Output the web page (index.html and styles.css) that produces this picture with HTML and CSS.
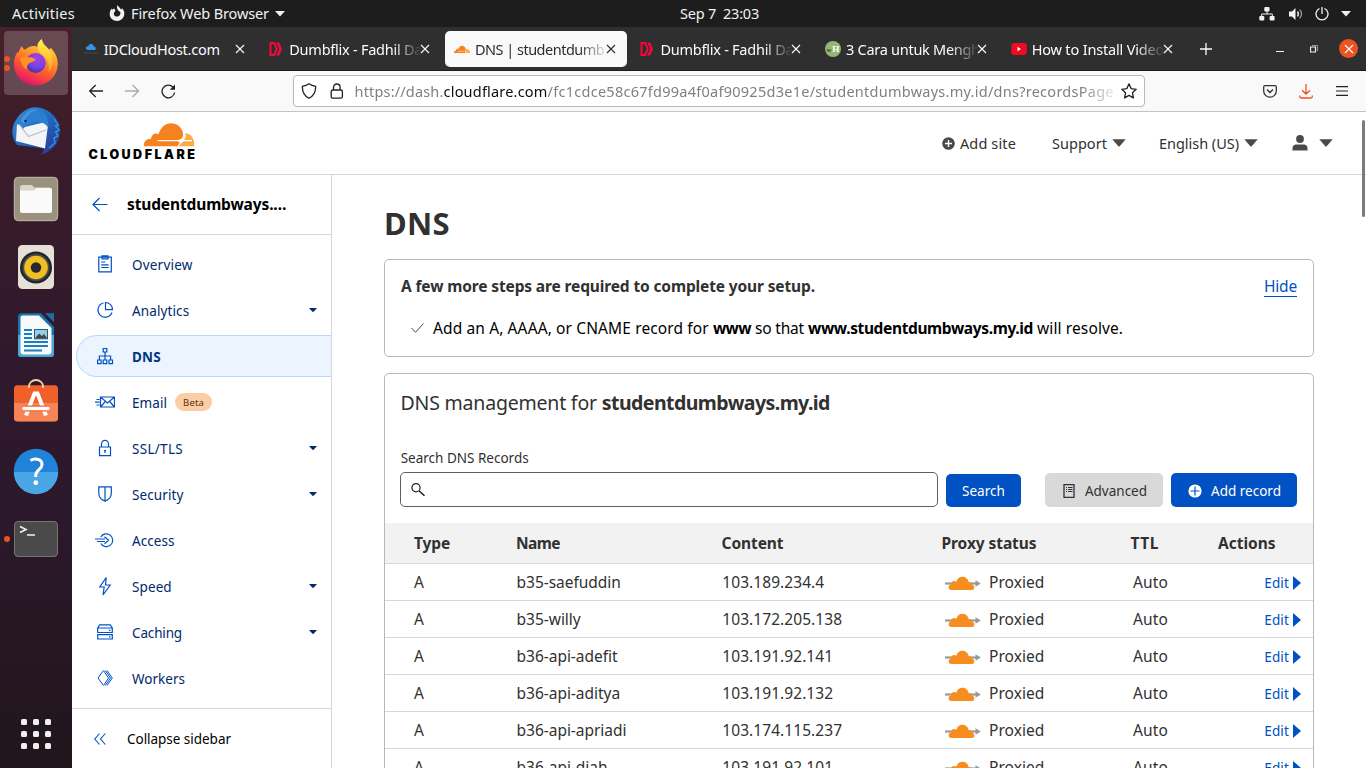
FILE: index.html
```html
<!DOCTYPE html>
<html lang="en">
<head>
<meta charset="utf-8">
<title>DNS | studentdumbways.my.id</title>
<link rel="stylesheet" href="styles.css">
</head>
<body>
<svg class="defs" width="0" height="0">
  <defs>
    <linearGradient id="fxBody" x1="0.8" y1="0" x2="0.35" y2="1"><stop offset="0" stop-color="#ffe83c"/><stop offset=".35" stop-color="#ffa02a"/><stop offset=".65" stop-color="#ff5a2e"/><stop offset="1" stop-color="#e4126e"/></linearGradient>
    <linearGradient id="fxTail" x1="0" y1="0" x2="0" y2="1"><stop offset="0" stop-color="#fff44f"/><stop offset="1" stop-color="#ff9e24"/></linearGradient>
    <radialGradient id="fxGlobe" cx=".6" cy=".25" r=".8"><stop offset="0" stop-color="#a63df0"/><stop offset=".6" stop-color="#7542e5"/><stop offset="1" stop-color="#43309b"/></radialGradient>
    <linearGradient id="tb" x1="0" y1="0" x2="1" y2="1"><stop offset="0" stop-color="#3a8fdb"/><stop offset=".45" stop-color="#1f6fc4"/><stop offset="1" stop-color="#2b2f8f"/></linearGradient>
    <symbol id="dumb" viewBox="0 0 16 16"><path d="M2.500 2H6.300L8.800 8l-2.500 6H2.500z" fill="none" stroke="#f5093d" stroke-width="2"/><path d="M8.300 1.500h2.900L14 8l-2.800 6.500H8.300L11.200 8z" fill="#f5093d"/></symbol>
    <symbol id="x" viewBox="0 0 10 10"><path d="M1 1l8 8M9 1L1 9" stroke="currentColor" stroke-width="1.1" fill="none"/></symbol>
    <symbol id="caret" viewBox="0 0 8 4"><path d="M0 0h8L4.800 3.600q-.8.7-1.600 0z" fill="#00296b"/></symbol>
    <symbol id="down" viewBox="0 0 14 8"><path d="M.3.300h13.400L7.700 7.200q-.7.700-1.400 0z" fill="#4a4a4a"/></symbol>
    <symbol id="proxied" viewBox="0 0 36 14"><path d="M0 7.500h32" stroke="#999" stroke-width="2.200"/><path d="M30.500 4.200l5.300 3.300-5.300 3.300z" fill="#999"/><path d="M6.500 14Q3.600 14 3.600 11.300 3.600 8.700 6.100 8.500 6 5 9.300 5q1.200 0 2 .8C12.300 2.500 14.500.8 17.500.800c3.600 0 5.700 2.400 6.300 5.800q1-.5 2.200-.1 1.400.6 1.300 2.300Q29.400 9.200 29.400 11.500 29.300 14 27 14z" fill="#f78d1e"/></symbol>
  </defs>
</svg>

<header class="topbar">
  <span class="activities">Activities</span>
  <div class="appmenu">
    <svg width="16" height="17" viewBox="0 0 16 17"><path d="M8.500 0c.5 2 3 2.600 3.500 4.800L13 3.300c1.600 1.500 2.500 3.400 2.300 5.700C15 13 12 16 8 16S.700 13 .700 9.300C.700 7 1.400 5 2.800 3.600l.4 1.200L5 3.500l1.500 1.800-1.200 1.900C4 9 5.500 11.600 8 11.600c2.600 0 4-2.400 3.200-4.500L9.500 5.800C8.200 4 7.400 2.500 8.500 0z" fill="#f2f2f2"/></svg>
    <span class="appname">Firefox Web Browser</span>
    <svg width="10" height="6" viewBox="0 0 10 6"><path d="M0 0h10L5 5.500z" fill="#f2f2f2"/></svg>
  </div>
  <span class="clock">Sep 7&nbsp; 23:03</span>
  <div class="tray">
    <svg width="16" height="14" viewBox="0 0 16 14"><path d="M8 4v3M2.700 10V7h10.600v3" stroke="#f2f2f2" fill="none"/><g fill="#f2f2f2"><rect x="5.300" width="5.200" height="4.500" rx="1"/><rect x=".3" y="9" width="5" height="4.500" rx="1"/><rect x="10.600" y="9" width="5" height="4.500" rx="1"/></g></svg>
    <svg width="16" height="14" viewBox="0 0 16 14"><path d="M1 4.500h3L7.500 1v12L4 9.500H1z" fill="#f2f2f2"/><path d="M9.500 4.500q1.800 2.500 0 5" stroke="#f2f2f2" fill="none" stroke-width="1.300"/><path d="M11.700 2.500q3.600 4.500 0 9" stroke="#aaa" fill="none" stroke-width="1.200"/></svg>
    <svg width="14" height="14" viewBox="0 0 14 14"><path d="M4.500 1.500a6 6 0 1 0 5 0M7 0v7" stroke="#f2f2f2" fill="none" stroke-width="1.300"/></svg>
    <svg width="10" height="6" viewBox="0 0 10 6"><path d="M0 0h10L5 5.500z" fill="#f2f2f2"/></svg>
  </div>
</header>

<div class="desktop">
  <aside class="dock">
    <div class="app running two active">
      <svg width="48" height="48" viewBox="0 0 48 48"><path d="M9.700 7c.8 2 2 3.200 4 3.600 2-2.800 6-4 9-3.500 1.500.3 3 1 4 2C26 5 27.500 1.500 30 .2c0 5 4.500 6.800 7.500 10.800l1-2.500c5 5 7.500 11 7.300 17C45 38 36 46.300 24 46.300S2.500 37.500 2 25.800C1.800 19.500 4 14.500 6 12.500l.3 1.800C7 12 8 9.500 9.700 7z" fill="url(#fxBody)"/><circle cx="23.700" cy="24" r="10" fill="url(#fxGlobe)"/><path d="M30 .2c0 5 4.500 6.800 7.500 10.800 5 7.500 4 17-1 22 1.500-7-.5-12-4-15C28 14 24.500 10 25.500 5.500 26.500 3 28 1 30 .2z" fill="url(#fxTail)"/><path d="M8 19.500c3-2 6-2 8.500-1 3-.5 5.500.5 7.300 2.200-1.500 2.300-4 2.300-5.800 3-2 1.200-3.800 3.300-2.500 7-4-1.500-5.500-5-7.500-11.200z" fill="#ff9420"/></svg>
    </div>
    <div class="app">
      <svg width="48" height="48" viewBox="0 0 48 48"><path d="M20 .5C32-1 44 7 47 18c2 8 0 17-5 22-4 4-9 7-14 7.500 3-1.500 4-3.500 4-6L5 38C-1 30-1 20 4 13 8 6 14 2 20 .500z" fill="url(#tb)"/><path d="M5 17L11 20.500 33.500 15l2.500 3-3 23.500L4 34z" fill="#f4f5f7"/><path d="M7 17l9.500 12.500L34 23" fill="none" stroke="#b8bcc4" stroke-width="1.200"/><path d="M9 14C12 5 19-1 27 3c7 2 10 9 9 17-4-5-11-7-18-4-4 1-5 5-7.500 6z" fill="#2c7fcf"/><path d="M9 14c3-8 10-13 17-11-8 1-12 6-14 14z" fill="#4596dc"/><circle cx="13.500" cy="14" r="1.200" fill="#123"/><path d="M42 12l4.500 6-3 1 4 4-4 2 2.500 4-4 2 1 5-6 5" fill="none" stroke="#3192dd" stroke-width="1.500"/></svg>
    </div>
    <div class="app">
      <svg width="48" height="48" viewBox="0 0 48 48"><rect x="2.300" y="2.300" width="43.400" height="43.400" rx="4" fill="#9a927e" stroke="#c4bda9"/><path d="M8 12.500Q8 10 10 10h10l2.500 2.500H37q3 0 3 3V20H8z" fill="#d9d5c8"/><path d="M8 15.500h14l2.500-2.500H38q2 0 2 2v21q0 2-2 2H10q-2 0-2-2z" fill="#fafafa"/></svg>
    </div>
    <div class="app">
      <svg width="48" height="48" viewBox="0 0 48 48"><rect x="6" y="2" width="36" height="44" rx="4.500" fill="#e6e1d6"/><circle cx="24" cy="24.500" r="16" fill="#24262d"/><circle cx="24" cy="24.500" r="13.500" fill="#4a4a50"/><circle cx="24" cy="24.500" r="11.800" fill="#f0bf20"/><circle cx="24" cy="24.500" r="5.200" fill="#28282c"/></svg>
    </div>
    <div class="app">
      <svg width="48" height="48" viewBox="0 0 48 48"><path d="M10 2.300h19L42 16v27q0 3-3 3H9q-3 0-3-3V6q0-3.700 4-3.700z" fill="#1674ad"/><path d="M6 24h36v19q0 3-3 3H9q-3 0-3-3z" fill="#4da6d8"/><path d="M10.500 4.500H27L39.500 17v23.500q0 3-3 3h-25q-3 0-3-3v-34q0-2 2-2z" fill="#f8f9fa"/><path d="M33 2.300h9v9z" fill="#1e6ea5"/><path d="M12 19h8M12 23h8M12 27h8M12 31h24M12 35h24M12 39.500h18" stroke="#1a7fc1" stroke-width="1.900"/><rect x="22.500" y="18.500" width="13" height="9.300" fill="#8fd0f3" stroke="#1f5f86"/><path d="M23 27.500l4-5 3 2.500 2-2 3.500 4.500z" fill="#444"/><circle cx="33.500" cy="20.500" r="1.200" fill="#f5b53a"/></svg>
    </div>
    <div class="app">
      <svg width="48" height="48" viewBox="0 0 48 48"><rect x="2" y="6.300" width="44" height="36" rx="3.500" fill="#f1602a"/><path d="M2 24h44v15q0 3.500-3.500 3.500h-37Q2 42.500 2 39z" fill="#f78456"/><path d="M17 9V7.500a7 6.500 0 0 1 14 0V9" fill="none" stroke="#f3d3a0" stroke-width="1.800"/><path d="M14 36.500l8.500-22h3l8.500 22" fill="none" stroke="#fff" stroke-width="4"/><path d="M12.500 29.500h23" stroke="#f1602a" stroke-width="6"/><path d="M12 29.500h24" stroke="#fff" stroke-width="3.500" stroke-linecap="round"/></svg>
    </div>
    <div class="app">
      <svg width="48" height="48" viewBox="0 0 48 48"><circle cx="24" cy="24" r="22.200" fill="#2082d8"/><path d="M1.800 25h44.400A22.200 22.200 0 0 1 1.800 25z" fill="#49a6e6"/><path d="M18.500 13.500c3-2 11.500-2.500 11.500 4 0 5-6.300 5.500-6.300 11v1.500" fill="none" stroke="#fff" stroke-width="3"/><circle cx="23.800" cy="35.700" r="2.400" fill="#fff"/></svg>
    </div>
    <div class="app running one">
      <svg width="48" height="48" viewBox="0 0 48 48"><rect x="2.500" y="6.500" width="43" height="35" rx="3.500" fill="#4a4a4a" stroke="#75756f"/><path d="M8 11.500l6 3-6 3M15 20h8" fill="none" stroke="#f2f2f2" stroke-width="1.600"/></svg>
    </div>
    <svg class="grid-icon" width="30" height="30" viewBox="0 0 30 30"><g fill="#f0efee"><rect width="6" height="6" rx="1.500"/><rect x="12" width="6" height="6" rx="1.500"/><rect x="24" width="6" height="6" rx="1.500"/><rect y="12" width="6" height="6" rx="1.500"/><rect x="12" y="12" width="6" height="6" rx="1.500"/><rect x="24" y="12" width="6" height="6" rx="1.500"/><rect y="24" width="6" height="6" rx="1.500"/><rect x="12" y="24" width="6" height="6" rx="1.500"/><rect x="24" y="24" width="6" height="6" rx="1.500"/></g></svg>
  </aside>

  <section class="browser">
    <div class="tabs">
      <div class="tab"><svg width="16" height="16" viewBox="0 0 16 16"><path d="M5 9q-2.300-.3-2-2.300.500-1.600 2.200-1.300C5.700 3.300 7 2.700 8.500 3c1.500.3 2.200 1.400 2.200 2.500 1.700 0 2.300 1 2.100 2-.2 1-.9 1.500-1.800 1.500z" fill="#2e97ea"/><path d="M1 12h14" stroke="#4d4d55" stroke-dasharray="2 .5"/></svg><span class="title idc">IDCloudHost.com</span><svg class="close" width="10" height="10"><use href="#x"/></svg></div>
      <div class="tab"><svg width="16" height="16"><use href="#dumb"/></svg><span class="title dumb">Dumbflix - Fadhil Da</span><svg class="close" width="10" height="10"><use href="#x"/></svg></div>
      <div class="tab selected"><svg width="16" height="16" viewBox="0 0 16 16"><path d="M0 12c0-1.800 1-2.500 2-2.500 0-1.500 1.500-2 2.500-1.500C5.300 5.800 6.500 4.700 8.500 4.800c2 .2 3 1.700 3.200 3.500L11 12z" fill="#f6821f"/><path d="M11.500 12l.5-4c2.600-.2 4 1.600 4 4z" fill="#fbad41"/><path d="M4 10.300h6.500" stroke="#fff" stroke-width=".5"/></svg><span class="title dns">DNS | studentdumb</span><svg class="close" width="10" height="10"><use href="#x"/></svg></div>
      <div class="tab"><svg width="16" height="16"><use href="#dumb"/></svg><span class="title dumb">Dumbflix - Fadhil Da</span><svg class="close" width="10" height="10"><use href="#x"/></svg></div>
      <div class="tab"><svg width="16" height="16" viewBox="0 0 16 16"><circle cx="8" cy="8" r="8" fill="#93b874"/><text class="wh1" x="1.500" y="10.500">w</text><text class="wh2" x="7.300" y="10.500">H</text></svg><span class="title cara">3 Cara untuk Mengh</span><svg class="close" width="10" height="10"><use href="#x"/></svg></div>
      <div class="tab"><svg width="16" height="16" viewBox="0 0 16 16"><rect x=".3" y="2" width="15.500" height="12" rx="3" fill="#f00b24"/><path d="M6.500 5.800v4.400l3.500-2.200z" fill="#fff"/></svg><span class="title howto">How to Install Video</span><svg class="close" width="10" height="10"><use href="#x"/></svg></div>
      <svg class="newtab" width="12" height="12" viewBox="0 0 12 12"><path d="M6 0v12M0 6h12" stroke="#fbfbfe" stroke-width="1.300"/></svg>
      <div class="window-buttons">
        <svg width="8" height="10" viewBox="0 0 8 10"><path d="M0 7.500h8" stroke="#f2f2f2"/></svg>
        <svg width="8" height="8" viewBox="0 0 8 8"><path d="M.5 2h5v5h-5z" fill="none" stroke="#f2f2f2" stroke-width="1.200"/><path d="M2 .500h5.500V6" fill="none" stroke="#999"/></svg>
        <span class="quit"><svg width="10" height="10"><use href="#x"/></svg></span>
      </div>
    </div>

    <div class="toolbar">
      <div class="navbuttons">
        <svg width="15" height="14" viewBox="0 0 15 14"><path d="M14 7H.7M6.700 1l-6 6 6 6" fill="none" stroke="#222" stroke-width="1.300"/></svg>
        <svg width="15" height="14" viewBox="0 0 15 14"><path d="M0 7H13.500M7.500 1l6 6-6 6" fill="none" stroke="#aaa" stroke-width="1.300"/></svg>
        <svg width="15" height="15" viewBox="0 0 15 15"><path d="M13.600 8.500A6.300 6.300 0 1 1 12 3.200" fill="none" stroke="#222" stroke-width="1.300"/><path d="M14 .5V5.800H8.700z" fill="#222"/></svg>
      </div>
      <div class="urlbar">
        <svg width="16" height="16" viewBox="0 0 16 16"><path d="M8 .800q3 2 6.600 2.500Q15 11.500 8 15.300 1 11.500 1.400 3.300 5 2.800 8 .800z" fill="none" stroke="#222" stroke-width="1.300"/></svg>
        <svg class="lock" width="14" height="16" viewBox="0 0 14 16"><rect x="1.200" y="7" width="11.200" height="8.200" rx="1.500" fill="none" stroke="#222" stroke-width="1.300"/><path d="M3.500 7V4.500a3.300 3.500 0 0 1 6.600 0V7" fill="none" stroke="#222" stroke-width="1.300"/></svg>
        <div class="url"><span class="scheme">https://dash.</span><span class="host">cloudflare.com</span><span class="path">/fc1cdce58c67fd99a4f0af90925d3e1e/studentdumbways.my.id/dns?recordsPage</span></div>
        <svg width="16" height="16" viewBox="0 0 16 16"><path d="M8 .900l2.200 4.700 5 .7-3.700 3.500.9 5.100L8 12.400l-4.400 2.500.9-5.100L.800 6.300l5-.7z" fill="none" stroke="#222" stroke-width="1.300" stroke-linejoin="round"/></svg>
      </div>
      <div class="tools">
        <svg width="14" height="13" viewBox="0 0 14 13"><path d="M2 .700h10q1.300 0 1.300 1.300v4a6.300 6.200 0 0 1-12.600 0V2Q.700.700 2 .700z" fill="none" stroke="#333" stroke-width="1.300"/><path d="M4 4.500l3 3 3-3" fill="none" stroke="#333" stroke-width="1.500"/></svg>
        <svg width="14" height="15" viewBox="0 0 14 15"><path d="M7 0v10M3 6.200L7 10l4-3.800M.700 11.500v1q0 1.500 1.500 1.500h9.600q1.500 0 1.500-1.500v-1" fill="none" stroke="#e95420" stroke-width="1.300"/></svg>
        <svg width="12" height="10" viewBox="0 0 12 10"><path d="M0 .600h12M0 5h12M0 9.400h12" stroke="#222" stroke-width="1.200"/></svg>
      </div>
    </div>

    <div class="page">
      <div class="scroll-thumb"></div>
      <header class="site-header">
        <svg class="logo" width="112" height="42" viewBox="0 0 112 42"><path d="M56 24.300c-.6-4.500 1.800-7.500 7-7.600.6-4.200 4-6.400 7.500-4.500C73 5 77.500 1.300 83 1.300c6 0 11 4 12 10 .3 1.500 0 3-.5 4.500l-3 5.800.5 2.700z" fill="#f6821f"/><path d="M91.500 24.300l5.700-13C103 11.500 107 17 106 24.300z" fill="#fbad41"/><path d="M69.500 18.600H104M90 24.500q2-3.500 5-5.200" stroke="#fff" stroke-width="1.200"/><path d="M97.800 11.500v3.200L95.500 19l-4 1.500-2.500-2 4.500-1.700 2-3z" fill="#fff"/><text class="wordmark" x=".4" y="37" textLength="106.500" lengthAdjust="spacing">CLOUDFLARE</text></svg>
        <nav class="account">
          <a class="addsite"><svg width="13" height="13" viewBox="0 0 13 13"><circle cx="6.500" cy="6.500" r="6.300" fill="#4a4a4a"/><path d="M6.500 3v7M3 6.500h7" stroke="#fff" stroke-width="1.400"/></svg><span>Add site</span></a>
          <a class="support"><span>Support</span><svg width="14" height="8"><use href="#down"/></svg></a>
          <a class="lang"><span>English (US)</span><svg width="14" height="8"><use href="#down"/></svg></a>
          <a class="user"><svg width="16" height="16" viewBox="0 0 16 16"><circle cx="8" cy="4" r="3.900" fill="#4a4a4a"/><path d="M.500 15.500v-2Q.500 9.500 4.500 9.500h7q4 0 4 4v2z" fill="#4a4a4a"/></svg><svg width="14" height="8"><use href="#down"/></svg></a>
        </nav>
      </header>

      <div class="columns">
        <aside class="sidebar">
          <div class="zone"><svg width="16" height="15" viewBox="0 0 16 15"><path d="M15.500 7.500H1M7.500 1L1 7.500 7.500 14" fill="none" stroke="#0051c3" stroke-width="1.200"/></svg><span>studentdumbways.…</span></div>
          <nav class="menu">
            <a class="item"><svg class="ico" viewBox="0 0 20 20"><path d="M3.800 2.200h12.500v14.600H3.800zM7 .800h6v3H7zM6.200 7h4M6.200 9.800h7.500M6.200 12.500h7.500"/></svg><span class="ov">Overview</span></a>
            <a class="item"><svg class="ico" viewBox="0 0 20 20"><path d="M8.500 2A7.200 7.200 0 1 0 17 11.500M10.500 1.500a7 7 0 0 1 7 7.200h-7z"/></svg><span class="an">Analytics</span><svg class="caret" width="8" height="4"><use href="#caret"/></svg></a>
            <a class="item current"><svg class="ico" viewBox="0 0 20 20"><path d="M8.200 1.500h3.600V5H8.200zM2.600 13h3.500v3.600H2.600zM8.200 13h3.600v3.600H8.200zM14 13h3.500v3.600H14zM10 5v8M4.400 13V9h11.200v4"/></svg><span class="dn">DNS</span></a>
            <a class="item"><svg class="ico" viewBox="0 0 20 20"><path d="M5.500 4h14v10h-14zM5.500 4l7 6 7-6M5.500 14l4.800-5.500M19.500 14l-4.800-5.500M1.500 6.500h3M0 9.200h4.500M1.500 12h3"/></svg><span class="em">Email</span><span class="beta">Beta</span></a>
            <a class="item"><svg class="ico" viewBox="0 0 20 20"><path d="M4.500 8h11v8.700h-11zM6.500 8V5a3.500 3.700 0 0 1 7 0v3M10 11v3M9 11.500h2"/></svg><span class="ssl">SSL/TLS</span><svg class="caret" width="8" height="4"><use href="#caret"/></svg></a>
            <a class="item"><svg class="ico" viewBox="0 0 20 20"><path d="M3.800 1.800h12.500v6.500q0 5.500-6.300 8-6.200-2.500-6.200-8zM10 1.800v14.500"/></svg><span class="sec">Security</span><svg class="caret" width="8" height="4"><use href="#caret"/></svg></a>
            <a class="item"><svg class="ico" viewBox="0 0 20 20"><path d="M5.800 6a6.400 6.400 0 1 1 0 6.500M0 8h10M2 10.500h8M9.500 5.800l4 3.500-4 3.500"/></svg><span class="ac">Access</span></a>
            <a class="item"><svg class="ico" viewBox="0 0 20 20"><path d="M11.200.500L4.800 10h4.400L8 18l7.200-10h-4.700z"/></svg><span class="sp">Speed</span><svg class="caret" width="8" height="4"><use href="#caret"/></svg></a>
            <a class="item"><svg class="ico" viewBox="0 0 20 20"><path d="M2.700 5h14.600v4.500H2.700zM2.700 11.700h14.600v4.300H2.700zM2.700 5l2-3.200h10.600l2 3.200M14 7.300h1.500M14 13.800h1.500"/></svg><span class="ca">Caching</span><svg class="caret" width="8" height="4"><use href="#caret"/></svg></a>
            <a class="item"><svg class="ico" viewBox="0 0 20 20"><path d="M8 2L3 9l5 7M8.500 1.500l5 7.500-5 7.500M12 1.500L17.300 9 12 16.500M10.300 1.500L15.500 9l-5.200 7.500" stroke-width="1"/></svg><span class="wo">Workers</span></a>
          </nav>
          <div class="collapse"><svg width="12" height="12" viewBox="0 0 12 12"><path d="M5.500.500L.700 6l4.800 5.500M11.300.500L6.500 6l4.800 5.500" fill="none" stroke="#0051c3" stroke-width="1.100"/></svg><span>Collapse sidebar</span></div>
        </aside>

        <main class="content">
          <h1>DNS</h1>
          <section class="card steps">
            <div class="steps-head"><strong>A few more steps are required to complete your setup.</strong><a>Hide</a></div>
            <div class="step"><svg width="13" height="10" viewBox="0 0 13 10"><path d="M.500 5l4 4.300L12.500.500" fill="none" stroke="#4a4a4a"/></svg><p><span class="s1">Add an A, AAAA, or CNAME record for</span> <b class="s2">www</b> <span class="s3">so that</span> <b class="s4">www.studentdumbways.my.id</b> <span class="s5">will resolve.</span></p></div>
          </section>
          <section class="card records">
            <h2><span>DNS management for</span> <b>studentdumbways.my.id</b></h2>
            <label for="q">Search DNS Records</label>
            <div class="controls">
              <div class="search"><svg width="14" height="13" viewBox="0 0 14 13"><circle cx="5" cy="4.800" r="4.100" fill="none" stroke="#222" stroke-width="1.200"/><path d="M8 7.800l5.500 5" stroke="#222" stroke-width="1.500"/></svg><input id="q" type="text"></div>
              <button class="btn primary find">Search</button>
              <button class="btn grey"><svg width="12" height="14" viewBox="0 0 12 14"><path d="M1 .700h10v12.600H1z" fill="none" stroke="#333" stroke-width="1.300"/><path d="M3 3.500h1m1 0h4.500M3 5.500h1m1 0h4.500M3 7.500h1m1 0h4.500" stroke="#333" stroke-width="1.200"/></svg>Advanced</button>
              <button class="btn primary add"><svg width="14" height="14" viewBox="0 0 14 14"><circle cx="7" cy="7" r="6.600" fill="#fff"/><path d="M7 2.500v9M2.500 7h9" stroke="#0051c3" stroke-width="1.200"/></svg>Add record</button>
            </div>
            <div class="table">
              <div class="row head"><span class="h1c">Type</span><span class="h2c">Name</span><span class="h3c">Content</span><span class="h4c">Proxy status</span><span class="h5c">TTL</span><span>Actions</span></div>
              <div class="row"><span>A</span><span class="name">b35-saefuddin</span><span class="ip">103.189.234.4</span><span class="proxy"><svg width="36" height="14"><use href="#proxied"/></svg>Proxied</span><span class="ttl">Auto</span><a>Edit<i></i></a></div>
              <div class="row"><span>A</span><span class="name">b35-willy</span><span class="ip">103.172.205.138</span><span class="proxy"><svg width="36" height="14"><use href="#proxied"/></svg>Proxied</span><span class="ttl">Auto</span><a>Edit<i></i></a></div>
              <div class="row"><span>A</span><span class="name">b36-api-adefit</span><span class="ip">103.191.92.141</span><span class="proxy"><svg width="36" height="14"><use href="#proxied"/></svg>Proxied</span><span class="ttl">Auto</span><a>Edit<i></i></a></div>
              <div class="row"><span>A</span><span class="name">b36-api-aditya</span><span class="ip">103.191.92.132</span><span class="proxy"><svg width="36" height="14"><use href="#proxied"/></svg>Proxied</span><span class="ttl">Auto</span><a>Edit<i></i></a></div>
              <div class="row"><span>A</span><span class="name">b36-api-apriadi</span><span class="ip">103.174.115.237</span><span class="proxy"><svg width="36" height="14"><use href="#proxied"/></svg>Proxied</span><span class="ttl">Auto</span><a>Edit<i></i></a></div>
              <div class="row"><span>A</span><span class="name">b36-api-diah</span><span class="ip">103.191.92.101</span><span class="proxy"><svg width="36" height="14"><use href="#proxied"/></svg>Proxied</span><span class="ttl">Auto</span><a>Edit<i></i></a></div>
            </div>
          </section>
        </main>
      </div>
    </div>
  </section>
</div>
</body>
</html>
```
FILE: styles.css
```css
* { box-sizing: border-box; }
html, body { height: 768px; overflow: hidden; }
body { margin: 0; width: 1366px; display: flex; flex-direction: column; font-family: "Noto Sans", "Open Sans", sans-serif; background: #fff; color: #313131; white-space: nowrap; }
svg { display: block; flex: none; }
.defs { position: absolute; }

/* System bar */
.topbar { height: 27px; flex: none; background: #1d1d1d; color: #f2f2f2; display: grid; grid-template-columns: 96px 572px 1fr auto; align-items: center; padding: 0 15px 0 12px; font-size: 14.5px; line-height: 27px; }
.activities { letter-spacing: .26px; }
.appmenu { display: flex; align-items: center; gap: 6px; padding-left: 1px; }
.appname { letter-spacing: -.12px; }
.clock { letter-spacing: -.23px; }
.tray { display: flex; align-items: center; gap: 13px; }
.tray svg:nth-child(n+3) { margin-left: -1.500px; }
.tray svg:last-child { margin-left: -1px; }

.desktop { display: flex; flex: 1; min-height: 0; }

/* Launcher */
.dock { width: 72px; flex: none; background: linear-gradient(#47212a 0, #3b1c2a 15%, #30192c 45%, #2b182b 68%, #20161b 100%); display: flex; flex-direction: column; padding: 2px 4px 0; }
.app { height: 68px; display: grid; place-items: center; position: relative; }
.app.active::after { content: ""; position: absolute; inset: 2px 0; border-radius: 4px; background: rgba(255,255,255,.19); }
.app svg { position: relative; z-index: 1; }
.app.running::before { content: ""; position: absolute; z-index: 2; left: 0; top: 31px; width: 6px; height: 6px; border-radius: 50%; background: #e95420; }
.app.two::before { top: 27px; box-shadow: 0 9px 0 #e95420; }
.grid-icon { margin: auto auto 19px; }

/* Browser chrome */
.browser { flex: 1; min-width: 0; display: flex; flex-direction: column; }
.tabs { height: 44px; flex: none; background: #302f30; border-bottom: 1px solid #1c1b1c; color: #fbfbfe; display: flex; align-items: center; font-size: 14.5px; line-height: 36px; }
.tab { width: 185.600px; height: 40px; padding-left: 9.700px; display: flex; align-items: center; gap: 5px; border: 2px solid transparent; background-clip: padding-box; border-radius: 7px; }
.tab > svg:first-child { margin-left: -1px; }
.tab.selected { background-color: #f9f9fa; color: #2b2b30; }
.title { width: 138px; -webkit-mask-image: linear-gradient(90deg, #000 104px, transparent 133px); mask-image: linear-gradient(90deg, #000 104px, transparent 133px); }
.tab .close { margin-left: -12px; }
.idc { letter-spacing: -.26px; -webkit-mask-image: none; mask-image: none; }
.dumb { letter-spacing: -.25px; }
.dns { letter-spacing: -.5px; }
.cara { letter-spacing: -.28px; }
.howto { letter-spacing: -.17px; }
.wh1 { font: 700 7px "Liberation Serif", serif; fill: #33442a; }
.wh2 { font: 700 9px "Liberation Serif", serif; fill: #fff; }
.newtab { margin-left: 14px; }
.window-buttons { margin-left: auto; padding-right: 8px; display: flex; align-items: center; gap: 26px; color: #fff; }
.quit { width: 19px; height: 19px; border-radius: 50%; background: #e95420; display: grid; place-items: center; margin-left: -5px; }
.toolbar { height: 41px; flex: none; background: #f9f9fa; border-bottom: 1px solid #c3c3c6; display: flex; align-items: center; padding: 0 18px 0 17px; }
.navbuttons { width: 204px; display: flex; align-items: center; gap: 21px; }
.urlbar { width: 852px; height: 32px; background: #fff; border: 1px solid #b9b9bd; border-radius: 4px; display: flex; align-items: center; padding: 0 7px; }
.lock { margin: 0 10.500px 0 13px; }
.url { width: 761px; margin-right: 5px; flex: none; font-size: 14.5px; line-height: 30px; color: #7f7f84; -webkit-mask-image: linear-gradient(90deg, #000 725px, transparent 766px); mask-image: linear-gradient(90deg, #000 725px, transparent 766px); }
.scheme { letter-spacing: .17px; }
.host { letter-spacing: .2px; color: #0c0c0d; }
.path { letter-spacing: .26px; }
.tools { margin-left: auto; display: flex; align-items: center; gap: 22px; }
.tools svg:nth-child(3) { margin-left: 1px; }

/* Dashboard */
.page { flex: 1; min-height: 0; display: flex; flex-direction: column; position: relative; }
.scroll-thumb { position: absolute; right: 1px; top: 8px; width: 3px; height: 97px; border-radius: 2px; background: #7b7b7b; }
.site-header { height: 63px; flex: none; border-bottom: 1px solid #d5d7d8; display: flex; justify-content: space-between; padding: 10px 33px 0 16px; }
.wordmark { font: 900 12.500px Inter, sans-serif; fill: #000; }
.account { display: flex; align-items: center; height: 43px; font-size: 14.5px; }
.account a { display: flex; align-items: center; }
.account span { margin-top: -2px; }
.addsite { gap: 5px; letter-spacing: .13px; }
.support { margin-left: 36px; gap: 5px; letter-spacing: .04px; }
.lang { margin-left: 33px; gap: 5px; letter-spacing: -.03px; }
.user { margin-left: 34px; gap: 11px; }
.user svg, .support svg, .lang svg { margin-top: -1px; }
.columns { flex: 1; min-height: 0; display: flex; }

/* Sidebar */
.sidebar { width: 260px; flex: none; border-right: 1px solid #d5d7d8; display: flex; flex-direction: column; color: #00296b; font-size: 13.500px; }
.zone { height: 60px; flex: none; border-bottom: 1px solid #d5d7d8; display: flex; align-items: center; gap: 19px; padding-left: 20px; color: #000; font-size: 15.500px; font-weight: 700; letter-spacing: -.13px; }
.zone span { margin-top: -2px; }
.menu { flex: none; padding: 8px 0 5px 4px; }
.item { height: 42px; margin-bottom: 4px; display: flex; align-items: center; padding: 0 14px 0 19px; border: 1px solid transparent; border-right: 0; }
.item > span { margin-top: 2px; }
.item.current { background: #ebf4ff; border-color: #b9d6ff; border-radius: 21px 0 0 21px; font-weight: 700; color: #003681; }
.ico { width: 20px; height: 20px; margin: 2px 17px 0 -1px; fill: none; stroke: #0051c3; stroke-width: 1.200; }
.caret { margin: 0 0 0 auto; }
.item .beta { height: 18px; padding: 0 8px; margin: 0 0 0 8px; border-radius: 9px; background: #fbcda5; color: #5d2f08; font-size: 9.500px; line-height: 19px; letter-spacing: .18px; }
.ov { letter-spacing: .2px; }
.an { letter-spacing: .12px; }
.dn { letter-spacing: .23px; }
.em { letter-spacing: .07px; }
.ssl { letter-spacing: .3px; }
.sec { letter-spacing: .1px; }
.ac { letter-spacing: .05px; }
.sp { letter-spacing: .1px; }
.ca { letter-spacing: -.15px; }
.wo { letter-spacing: .02px; }
.collapse { flex: 1; border-top: 1px solid #d5d7d8; display: flex; align-items: center; gap: 21px; padding: 0 0 0 22px; color: #000; letter-spacing: -.03px; }

/* DNS page */
.content { flex: 1; padding: 24px 52px 0; overflow: hidden; }
h1 { margin: 0 0 12px; font-size: 31px; line-height: 48px; letter-spacing: .3px; }
.card { border: 1px solid #b6b7b8; border-radius: 5px; background: #fff; }
.steps { height: 98px; padding: 12px 16px; font-size: 15.500px; line-height: 28px; }
.steps-head { display: flex; justify-content: space-between; }
.steps-head strong { letter-spacing: -.13px; }
.steps-head a { color: #0051c3; letter-spacing: -.19px; line-height: 22px; margin-top: 3px; height: 22px; border-bottom: 1px solid #0051c3; }
.step { display: flex; align-items: center; margin-top: 14px; padding-left: 10px; gap: 9px; color: #000; }
.step p { margin: 0; display: flex; gap: 4.100px; }
.s1 { letter-spacing: .12px; }
.s2 { letter-spacing: -.6px; }
.s3 { letter-spacing: -.19px; }
.s4 { letter-spacing: -.37px; }
.s5 { letter-spacing: .11px; }
.records { margin-top: 16px; height: 460px; }
h2 { margin: 14px 0 0 15.500px; font-size: 19.500px; font-weight: 400; line-height: 30px; display: flex; gap: 5px; }
h2 span { letter-spacing: -.2px; }
h2 b { letter-spacing: -.56px; }
.records label { display: block; margin: 30px 0 3px 15.700px; font-size: 13.500px; line-height: 21px; }
.controls { display: flex; align-items: flex-end; height: 35px; padding: 0 16px 0 15px; }
.search { width: 538px; height: 35px; border: 1px solid #606060; border-radius: 5px; display: flex; align-items: center; padding-left: 10px; }
.search input { flex: 1; border: 0; outline: 0; background: none; height: 30px; }
.btn { border: 0; border-radius: 5px; height: 34px; font: 13.500px/34px "Noto Sans", sans-serif; display: flex; align-items: center; justify-content: center; padding: 1px 0 0; }
.primary { background: #0051c3; color: #fff; }
.find { width: 75px; height: 33px; margin: 0 24px 0 8px; padding: 0; letter-spacing: .05px; }
.grey { width: 118px; gap: 10px; padding-left: 2px; background: #d9d9d9; color: #313131; }
.add { width: 126px; gap: 9px; padding-left: 1px; margin-left: 8px; }
.table { margin-top: 16px; font-size: 15.500px; }
.row { height: 37px; border-bottom: 1px solid #d5d7d8; display: grid; grid-template-columns: 102px 205.500px 220px 189px 87.500px 1fr; padding: 0 12px 0 29px; line-height: 36px; }
.row.head { height: 41px; line-height: 40px; background: #f2f2f2; font-weight: 700; }
.h1c { letter-spacing: -.13px; }
.h2c { letter-spacing: -.56px; }
.h3c, .h4c { letter-spacing: -.07px; }
.h5c { letter-spacing: .5px; }
.name { padding-left: .6px; letter-spacing: -.03px; }
.ip { padding-left: .8px; letter-spacing: .06px; }
.proxy { display: flex; align-items: center; gap: 8px; height: 36px; padding-left: 3.500px; letter-spacing: .05px; }
.proxy svg { margin-top: 2px; }
.ttl { padding-left: 2.500px; letter-spacing: .14px; }
.row a { grid-column: 6; justify-self: end; display: flex; align-items: center; gap: 3.500px; padding-top: 1px; margin-right: .5px; color: #0051c3; font-size: 13.500px; letter-spacing: .15px; }
.row i { width: 0; height: 0; border: 7px solid transparent; border-left: 8px solid #0051c3; border-right: 0; }
```
